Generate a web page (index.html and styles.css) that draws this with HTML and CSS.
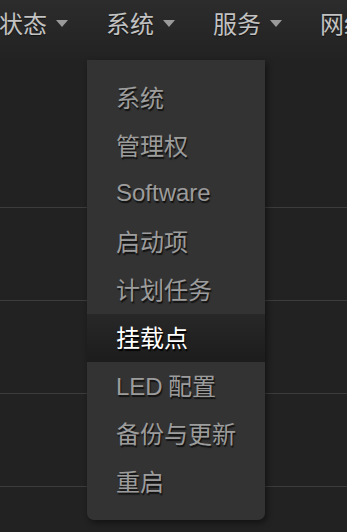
FILE: index.html
```html
<!DOCTYPE html>
<html lang="zh">
<head>
<meta charset="utf-8">
<link rel="stylesheet" href="styles.css">
</head>
<body>
<header class="topbar">
  <nav class="nav">
    <div class="nav-item first"><span>状态</span><i class="caret"></i></div>
    <div class="nav-item open"><span>系统</span><i class="caret"></i>
      <ul class="dropdown">
        <li>系统</li>
        <li>管理权</li>
        <li class="latin">Software</li>
        <li>启动项</li>
        <li>计划任务</li>
        <li class="active">挂载点</li>
        <li><span class="latin">LED</span> 配置</li>
        <li>备份与更新</li>
        <li>重启</li>
      </ul>
    </div>
    <div class="nav-item"><span>服务</span><i class="caret"></i></div>
    <div class="nav-item"><span>网络</span><i class="caret"></i></div>
  </nav>
</header>
<main class="content">
  <div class="row row-top"></div>
  <div class="row"></div>
  <div class="row"></div>
  <div class="row"></div>
  <div class="row"></div>
</main>
</body>
</html>
```
FILE: styles.css
```css
* { box-sizing: border-box; }
html, body {
  margin: 0;
  padding: 0;
  background: #222222;
  overflow: hidden;
}
body {
  width: 347px;
  height: 532px;
  font-family: "Liberation Sans", "Noto Sans CJK SC", sans-serif;
  font-size: 24px;
}
.topbar {
  height: 60px;
  background: linear-gradient(to bottom, #2c2c2c 0%, #242424 80%, #222222 100%);
  position: relative;
  z-index: 2;
}
.nav {
  display: flex;
  margin-left: -20px;
  white-space: nowrap;
}
.nav-item {
  position: relative;
  display: flex;
  align-items: center;
  gap: 9px;
  height: 44px;
  padding: 0 19px;
  color: #c2c2c2;
  text-shadow: 0 1px 1px rgba(0,0,0,0.6);
  font-family: "Noto Sans CJK SC", sans-serif;
}
.caret {
  display: block;
  width: 0;
  height: 0;
  border-left: 6px solid transparent;
  border-right: 6px solid transparent;
  border-top: 7px solid #9a9a9a;
  margin-top: 2px;
}
.dropdown {
  position: absolute;
  top: 60px;
  left: 0;
  width: 178px;
  height: 460px;
  margin: 0;
  padding: 14px 0 14px;
  list-style: none;
  background: #333333;
  border-radius: 0 0 7px 7px;
  box-shadow: 2px 3px 6px rgba(0,0,0,0.45);
}
.dropdown li {
  height: 48px;
  line-height: 46px;
  padding-left: 29px;
  color: #9c9c9c;
  font-family: "Noto Sans CJK SC", sans-serif;
  text-shadow: 1px 2px 1px #111;
}
.dropdown li.latin,
.dropdown .latin {
  font-family: "Liberation Sans", sans-serif;
}
.dropdown li.active {
  color: #ffffff;
  background: linear-gradient(to bottom, #282828, #1c1c1c);
  text-shadow: 1px 2px 1px #000;
}
.content {
  position: relative;
  z-index: 1;
}
.row {
  height: 93px;
  border-bottom: 1px solid #3c3c3c;
}
.row-top {
  height: 148px;
}
```
